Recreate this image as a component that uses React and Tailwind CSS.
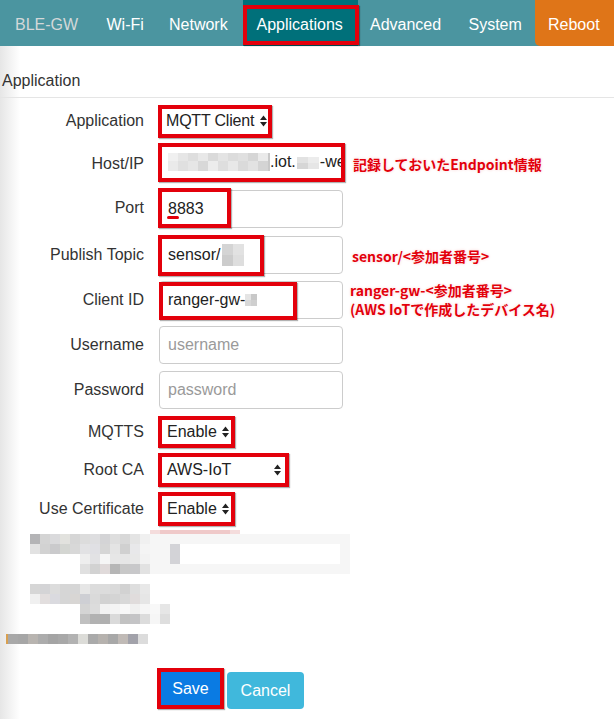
import React from "react";

const RED = "border-[#e3000b]";

function Arrows() {
  return (
    <svg width="7" height="12" viewBox="0 0 7 12" className="shrink-0">
      <path d="M0 5 L3.5 0.5 L7 5 Z M0 7 L7 7 L3.5 11.5 Z" fill="#222" />
    </svg>
  );
}

function Blocks({ x, y, w, h, colors }) {
  return colors.map((c, i) => (
    <rect key={i} x={x + i * w} y={y} width={w} height={h} fill={"#" + c} />
  ));
}

function Label({ children }) {
  return (
    <div className="w-[144px] shrink-0 text-right text-[16px] leading-[20px] text-[#333]">
      {children}
    </div>
  );
}

function Note({ children, className = "" }) {
  return (
    <div
      className={
        "font-['Noto_Sans_CJK_JP','Liberation_Sans',sans-serif] font-bold text-[14px] leading-[19px] text-[#e3000b] [text-shadow:0_0_2px_#fff,0_0_3px_#f6c8c8] " +
        className
      }
    >
      {children}
    </div>
  );
}

export default function App() {
  return (
    <div className="w-[614px] h-[719px] bg-white font-['Liberation_Sans',Arial,sans-serif] overflow-hidden">
      {/* Navbar */}
      <div className="flex h-[46px] bg-[#4b95a0] text-[16px] text-white">
        <div className="w-[93px] pl-[15px] pt-[3px] flex items-center text-[#d3d8d9]">BLE-GW</div>
        <div className="w-[63px] pl-[13.5px] pt-[3px] flex items-center">Wi-Fi</div>
        <div className="w-[87px] pl-[13px] pt-[3px] flex items-center">Network</div>
        <div className="relative w-[115px] pl-[13.5px] pt-[3px] flex items-center bg-[#00707a]">
          Applications
          <div className={"absolute left-0 top-[5px] w-[116px] h-[40px] border-4 " + RED + " shadow-[1px_1px_1px_rgba(0,0,0,0.35)]"} />
        </div>
        <div className="w-[97px] pl-[12px] pt-[3px] flex items-center">Advanced</div>
        <div className="w-[80px] pl-[13.5px] pt-[3px] flex items-center">System</div>
        <div className="flex-1 pl-[13px] pt-[3px] flex items-center bg-[#df7518] rounded-bl-[5px]">Reboot</div>
      </div>

      {/* Content */}
      <div className="h-[673px] bg-[linear-gradient(to_right,#e6e6e6,#ffffff_20px)]">
        <div className="h-[52px] pt-[25px] pl-[2px] border-b border-[#e5e5e5] text-[16px] leading-[20px] text-[#333]">
          Application
        </div>

        <div className="flex flex-col">
          {/* Application select */}
          <div className="mt-[6px] h-[34px] flex items-center">
            <Label>Application</Label>
            <div className={"ml-[14px] w-[114px] h-[33px] border-4 " + RED + " bg-white flex items-center pl-[4px] pr-[1px] text-[16px] text-[#222] shadow-[1px_1px_1px_rgba(0,0,0,0.3)]"}>
              <span className="tracking-[-0.2px]">MQTT Client</span>
              <span className="ml-auto"><Arrows /></span>
            </div>
          </div>

          {/* Host/IP */}
          <div className="mt-[4px] h-[40px] flex items-center">
            <Label><span className="relative top-[2px]">Host/IP</span></Label>
            <div className={"ml-[14px] w-[187px] h-[39px] border-4 " + RED + " bg-white flex items-center pl-[6px] overflow-hidden whitespace-nowrap text-[16px] text-[#222] shadow-[1px_1px_1px_rgba(0,0,0,0.3)]"}>
              <svg width="102" height="18" className="shrink-0">
                <Blocks x={0} y={0} w={10} h={8} colors={["f0f0f0", "e6e6e6", "dedede", "e8e8e8", "dadada", "e4e4e4", "dcdcdc", "e0e0e0", "d6d6d6", "eaeaea"]} />
                <Blocks x={0} y={8} w={10} h={10} colors={["eaeaea", "e0e0e0", "e6e6e6", "d8d8d8", "ececec", "dedede", "e8e8e8", "dadada", "e2e2e2", "d4d4d4"]} />
                <rect x="100" y="0" width="2" height="18" fill="#c8c8c8" />
              </svg>
              <span>.iot.</span>
              <svg width="22" height="14" className="shrink-0 mx-[1px]">
                <Blocks x={0} y={2} w={11} h={6} colors={["e2e2e2", "ececec"]} />
                <Blocks x={0} y={8} w={11} h={6} colors={["d6d6d6", "e6e6e6"]} />
              </svg>
              <span>-we</span>
            </div>
            <Note className="ml-[8px] relative top-[2px]">記録しておいたEndpoint情報</Note>
          </div>

          {/* Port */}
          <div className="mt-[6px] h-[40px] flex items-center">
            <Label>Port</Label>
            <div className="relative ml-[15px] mt-[2px] w-[184px] h-[38px] border border-[#cccccc] rounded-[4px] bg-white flex items-center pl-[8px] text-[16px] text-[#222]">
              8883
              <div className="absolute left-[7px] top-[25px] w-[12px] h-[3px] rounded-full bg-[#e3000b]" />
              <div className={"absolute -left-[2px] -top-[3px] w-[73px] h-[40px] border-4 " + RED + " shadow-[1px_1px_1px_rgba(0,0,0,0.3)]"} />
            </div>
          </div>

          {/* Publish Topic */}
          <div className="mt-[6px] h-[41px] flex items-center">
            <Label>Publish Topic</Label>
            <div className="relative ml-[15px] w-[184px] h-[38px] border border-[#cccccc] rounded-[4px] bg-white flex items-center pl-[8px] text-[16px] text-[#222]">
              sensor/
              <svg width="22" height="22" className="ml-[2px]">
                <Blocks x={0} y={0} w={11} h={11} colors={["d4d4d4", "e2e2e2"]} />
                <Blocks x={0} y={11} w={11} h={11} colors={["cccccc", "dedede"]} />
              </svg>
              <div className={"absolute -left-[2px] -top-[2px] w-[106px] h-[41px] border-4 " + RED + " shadow-[1px_1px_1px_rgba(0,0,0,0.3)]"} />
            </div>
            <Note className="ml-[9px] relative top-[2px]">sensor/&lt;参加者番号&gt;</Note>
          </div>

          {/* Client ID */}
          <div className="mt-[6px] h-[38px] flex items-center">
            <Label>Client ID</Label>
            <div className="relative ml-[15px] w-[184px] h-[38px] border border-[#cccccc] rounded-[4px] bg-white flex items-center pl-[8px] text-[16px] text-[#222]">
              ranger-gw-
              <svg width="12" height="12" className="ml-0">
                <Blocks x={0} y={0} w={6} h={6} colors={["e4e4e4", "c8c8c8"]} />
                <Blocks x={0} y={6} w={6} h={6} colors={["d8d8d8", "cfcfcf"]} />
              </svg>
              <div className={"absolute -left-[1px] top-0 w-[138px] h-[38px] border-4 " + RED + " shadow-[1px_1px_1px_rgba(0,0,0,0.3)]"} />
            </div>
            <Note className="ml-[7px]">
              <div>ranger-gw-&lt;参加者番号&gt;</div>
              <div>(AWS IoTで作成したデバイス名)</div>
            </Note>
          </div>

          {/* Username */}
          <div className="mt-[7px] h-[38px] flex items-center">
            <Label>Username</Label>
            <div className="ml-[15px] w-[184px] h-[38px] border border-[#cccccc] rounded-[4px] bg-white flex items-center pl-[8px] text-[16px] text-[#9a9a9a]">
              username
            </div>
          </div>

          {/* Password */}
          <div className="mt-[7px] h-[38px] flex items-center">
            <Label>Password</Label>
            <div className="ml-[15px] w-[184px] h-[38px] border border-[#cccccc] rounded-[4px] bg-white flex items-center pl-[8px] text-[16px] text-[#9a9a9a]">
              password
            </div>
          </div>

          {/* MQTTS */}
          <div className="mt-[7px] h-[32px] flex items-center">
            <Label>MQTTS</Label>
            <div className={"ml-[14px] w-[77px] h-[32px] border-4 " + RED + " bg-white flex items-center pl-[5px] pr-[2px] text-[16px] text-[#222] shadow-[1px_1px_1px_rgba(0,0,0,0.3)]"}>
              <span>Enable</span>
              <span className="ml-auto"><Arrows /></span>
            </div>
          </div>

          {/* Root CA */}
          <div className="mt-[5px] h-[34px] flex items-center">
            <Label>Root CA</Label>
            <div className={"ml-[14px] w-[131px] h-[34px] border-4 " + RED + " bg-white flex items-center pl-[5px] pr-[4px] text-[16px] text-[#222] shadow-[1px_1px_1px_rgba(0,0,0,0.3)]"}>
              <span>AWS-IoT</span>
              <span className="ml-auto"><Arrows /></span>
            </div>
          </div>

          {/* Use Certificate */}
          <div className="mt-[5px] h-[34px] flex items-center">
            <Label>Use Certificate</Label>
            <div className={"ml-[14px] w-[77px] h-[34px] border-4 " + RED + " bg-white flex items-center pl-[5px] pr-[2px] text-[16px] text-[#222] shadow-[1px_1px_1px_rgba(0,0,0,0.3)]"}>
              <span>Enable</span>
              <span className="ml-auto"><Arrows /></span>
            </div>
          </div>

          {/* Blurred area */}
          <div className="mt-[4px] h-[124px]">
            <svg width="350" height="124">
              <rect x="150" y="0" width="90" height="4" fill="#f4dcdc" />
              <rect x="160" y="0" width="70" height="4" fill="#efc9c9" />
              <rect x="150" y="4" width="200" height="40" fill="#f6f6f6" />
              <rect x="170" y="14" width="170" height="20" fill="#ffffff" />
              <rect x="170" y="14" width="10" height="20" fill="#d3d3d7" />
              <Blocks x={30} y={4} w={10} h={10} colors={["b4b4b6", "d4d4d4", "dadadc", "e2e2de", "d6d6d6", "dcdcdc", "dedee0", "d4d4d6", "dedede", "d8d8d8", "e4e4e4", "f0f0f0"]} />
              <Blocks x={30} y={14} w={10} h={10} colors={["e2e2e2", "d2d2d2", "cacacc", "d4d6d2", "d8d8d8", "e2e2e4", "e0e0e4", "d6d6d6", "e4e4e4", "d0d0d0", "e8e8ea", "f4f4f4"]} />
              <Blocks x={80} y={24} w={10} h={10} colors={["eeeeee", "e2e2e4", "f6f6f6", "e6e6e6", "e6e6e6", "e8e8e8", "f2f2f2"]} />
              <Blocks x={80} y={34} w={10} h={10} colors={["e0e0e0", "d2d2d2", "e0dada", "b6b6b6", "c8c8c8", "c8c8ca", "e2e2e2"]} />
              <Blocks x={30} y={54} w={10} h={10} colors={["d6d6d6", "d4d4d6", "dcdcdc", "d6d6d6", "d6d6d6", "e6e6e6", "dcdcdc", "dcdcdc", "dadada", "d2d2d2", "dedede", "e8e8e8"]} />
              <Blocks x={30} y={64} w={10} h={10} colors={["f0f0f0", "e2dede", "dadadf", "d6d6d6", "d8d6d4", "cecfd4", "dadada", "d2d2d2", "d4d4d4", "d8d8d8", "e0dcdc", "e6e6e6"]} />
              <Blocks x={80} y={74} w={10} h={10} colors={["d4d4d4", "dcdcdc", "f2f2f2", "f4f4f4", "f8f8f8", "f0f0f0", "f6f6f6", "f8f8f8", "e6e6e6"]} />
              <Blocks x={80} y={84} w={10} h={10} colors={["c0c0c0", "b2b2b2", "b0b0b0", "dadada", "c2c2c2", "c4c4c6", "dcdcdc", "f6f6f6", "dedede"]} />
              <rect x="6" y="104" width="2" height="10" fill="#d9a050" />
              <Blocks x={8} y={104} w={10} h={10} colors={["a8a8a8", "a6a6a6", "b8b4b0", "acacac", "a4a4a4", "a8a8a8", "b2b2b2", "dcdcd8", "aaaaaa", "b6b2ae", "a8a8a8", "c0bab6", "a2a2aa", "dcdcdc"]} />
            </svg>
          </div>

          {/* Buttons */}
          <div className="mt-[14px] h-[41px] flex items-end pl-[157px]">
            <div className={"w-[67px] h-[41px] border-4 " + RED + " bg-[#0a7be3] flex items-center justify-center pt-[1px] text-white text-[16px] shadow-[1px_1px_1px_rgba(0,0,0,0.3)]"}>
              Save
            </div>
            <div className="ml-[3px] w-[77px] h-[37px] rounded-[4px] bg-[#40b8dc] flex items-center justify-center text-white text-[16px]">
              Cancel
            </div>
          </div>
        </div>
      </div>
    </div>
  );
}
